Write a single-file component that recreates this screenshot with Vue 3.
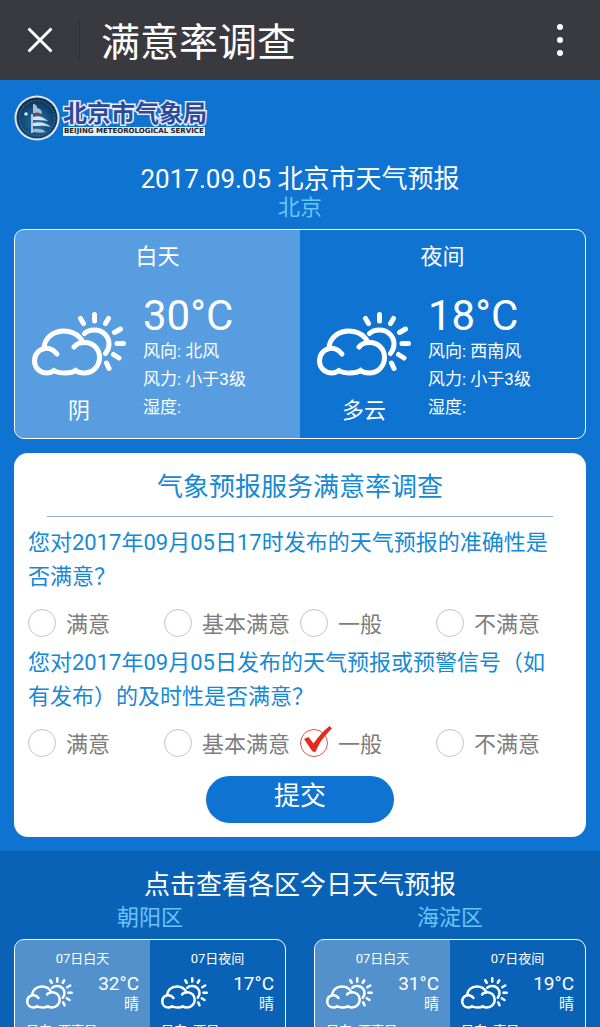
<script setup>
import { ref } from 'vue'

const rays = [
  'M62.5 2.5V9', 'M48.5 6.5L51.5 11.5', 'M76.5 6.5L73.5 11.5', 'M88.5 17L82.5 20.5',
  'M85 31.5H91.5', 'M81.5 42.5L87 46', 'M74.5 51L77 56.5',
]

const today = [
  { label: '白天', sky: '阴', temp: '30°C', details: ['风向: 北风', '风力: 小于3级', '湿度:'] },
  { label: '夜间', sky: '多云', temp: '18°C', details: ['风向: 西南风', '风力: 小于3级', '湿度:'] },
]

const districts = [
  {
    name: '朝阳区',
    parts: [
      { label: '07日白天', temp: '32°C', sky: '晴', wind: '风向: 西南风' },
      { label: '07日夜间', temp: '17°C', sky: '晴', wind: '风向: 西风' },
    ],
  },
  {
    name: '海淀区',
    parts: [
      { label: '07日白天', temp: '31°C', sky: '晴', wind: '风向: 西南风' },
      { label: '07日夜间', temp: '19°C', sky: '晴', wind: '风向: 南风' },
    ],
  },
]

const choices = ['满意', '基本满意', '一般', '不满意']
const questions = ref([
  { id: 'accuracy', text: '您对2017年09月05日17时发布的天气预报的准确性是否满意？', answer: '' },
  { id: 'timeliness', text: '您对2017年09月05日发布的天气预报或预警信号（如有发布）的及时性是否满意？', answer: '一般' },
])
</script>

<template>
  <div class="app">
    <header class="bar">
      <button class="bar-btn close" type="button" aria-label="关闭">
        <svg width="26" height="26" viewBox="0 0 26 26"><path d="M1.5 1.5L24.5 24.5M24.5 1.5L1.5 24.5" /></svg>
      </button>
      <h1 class="bar-title">满意率调查</h1>
      <button class="bar-btn more" type="button" aria-label="更多">
        <svg width="8" height="34" viewBox="0 0 8 34">
          <circle cx="4" cy="4" r="3" /><circle cx="4" cy="17" r="3" /><circle cx="4" cy="30" r="3" />
        </svg>
      </button>
    </header>

    <main class="content">
      <section class="hero">
        <div class="brand">
          <svg class="emblem" width="46" height="46" viewBox="0 0 46 46">
            <defs>
              <radialGradient id="globe" cx="0.5" cy="0.6" r="0.6">
                <stop offset="0" stop-color="#2a72a8" />
                <stop offset="0.6" stop-color="#124a78" />
                <stop offset="1" stop-color="#0b2a48" />
              </radialGradient>
            </defs>
            <circle cx="23" cy="23" r="22.5" fill="#dfe7ec" />
            <circle cx="23" cy="23" r="20.5" fill="url(#globe)" />
            <circle cx="23" cy="23" r="17.5" fill="none" stroke="#7fa0b8" stroke-width="1.5" stroke-dasharray="1.5 1.5" opacity="0.4" />
            <path d="M19 9C22 9 23 11 23 13C27 14 28 16 28 19C24 17 21 18 19 18V9Z" fill="#a9bfd0" />
            <path d="M17 19V38H19V19Z" fill="#b7cad8" />
            <path d="M19 22C25 20 29 22 34 26C29 25 25 25 19 25Z" fill="#d6e3ec" />
            <path d="M19 28C26 26 32 28 37 32C30 30 25 31 19 31Z" fill="#d6e3ec" />
            <path d="M19 34C25 33 29 34 32 37C28 38 24 38 19 37Z" fill="#9fb9cc" />
            <circle cx="12" cy="19" r="1.8" fill="#dce8f0" />
            <circle cx="23" cy="19" r="1.5" fill="#c52b3a" />
          </svg>
          <div class="brand-text">
            <span class="brand-cn">北京市气象局</span>
            <span class="brand-en">BEIJING METEOROLOGICAL SERVICE</span>
          </div>
        </div>

        <h2 class="heading">2017.09.05 北京市天气预报</h2>
        <p class="region">北京</p>

        <div class="today frame">
          <article v-for="part in today" :key="part.label" class="half">
            <h3 class="half-title">{{ part.label }}</h3>
            <div class="half-body">
              <div class="sky">
                <svg class="weather" viewBox="0 0 94 64">
                  <path d="M25 42C21 37 16 36 12.500 36.500C6 38 2.500 43 2.500 49C2.500 56 8 61 15 61C18 61 20 60 22 58.500C25 60.500 29 61 33 61C37 61 41 60.500 43.500 58.500C46 60.500 49 61 52 61C61 61 67.500 54 67.500 45.500C67.500 37 61 30.500 53 30.500C48 30.500 44 32 42 35" />
                  <path d="M12 36C12.500 27 20 19 32 19C41 19 47 23 51 30" />
                  <path d="M52.500 21.500C55 19 59 18 62.500 18C71 18 77 24.500 77 32C77 36 75.500 39 73.500 41.500" />
                  <path v-for="ray in rays" :key="ray" :d="ray" />
                </svg>
                <p class="sky-name">{{ part.sky }}</p>
              </div>
              <div>
                <p class="temp">{{ part.temp }}</p>
                <p v-for="line in part.details" :key="line" class="detail">{{ line }}</p>
              </div>
            </div>
          </article>
        </div>

        <form class="survey" @submit.prevent>
          <h2 class="survey-title">气象预报服务满意率调查</h2>
          <fieldset v-for="question in questions" :key="question.id" class="question">
            <legend class="question-text">{{ question.text }}</legend>
            <div class="choices">
              <label v-for="choice in choices" :key="choice" class="choice">
                <span class="mark">
                  <input v-model="question.answer" class="radio" type="radio" :name="question.id" :value="choice" />
                  <svg v-if="question.answer === choice" class="tick" width="32" height="32" viewBox="0 0 32 32">
                    <path d="M4 14L8.500 12L13.500 18.500C18 12 23 6 29.500 1L32 3.500C25 10 19 18 15.500 27L12.500 26.500Z" />
                  </svg>
                </span>
                {{ choice }}
              </label>
            </div>
          </fieldset>
          <button class="submit" type="submit">提交</button>
        </form>
      </section>

      <section class="areas">
        <h2 class="heading">点击查看各区今日天气预报</h2>
        <div class="area-list">
          <a v-for="area in districts" :key="area.name" class="area" href="#">
            <span class="area-name">{{ area.name }}</span>
            <span class="area-card frame">
              <span v-for="part in area.parts" :key="part.label" class="half small">
                <span class="small-title">{{ part.label }}</span>
                <span class="small-body">
                  <svg class="weather weather-small" viewBox="0 0 94 64">
                    <path d="M25 42C21 37 16 36 12.500 36.500C6 38 2.500 43 2.500 49C2.500 56 8 61 15 61C18 61 20 60 22 58.500C25 60.500 29 61 33 61C37 61 41 60.500 43.500 58.500C46 60.500 49 61 52 61C61 61 67.500 54 67.500 45.500C67.500 37 61 30.500 53 30.500C48 30.500 44 32 42 35" />
                    <path d="M12 36C12.500 27 20 19 32 19C41 19 47 23 51 30" />
                    <path d="M52.500 21.500C55 19 59 18 62.500 18C71 18 77 24.500 77 32C77 36 75.500 39 73.500 41.500" />
                    <path v-for="ray in rays" :key="ray" :d="ray" />
                  </svg>
                  <span class="small-info">
                    <span class="small-temp">{{ part.temp }}</span>
                    <span class="small-sky">{{ part.sky }}</span>
                  </span>
                </span>
                <span class="small-wind">{{ part.wind }}</span>
              </span>
            </span>
          </a>
        </div>
      </section>
    </main>
  </div>
</template>

<style>
body {
  background: #0a62b7;
}
</style>

<style scoped>
.app {
  display: flex;
  flex-direction: column;
  height: 100vh;
  color: #fff;
  font-family: Roboto, "Noto Sans CJK SC", sans-serif;
}
h1, h2, h3, p {
  margin: 0;
  font-weight: 400;
}
button {
  border: 0;
  color: inherit;
  font-family: inherit;
  cursor: pointer;
}
.bar {
  display: flex;
  flex: none;
  align-items: center;
  height: 80px;
  background: #393a3f;
}
.bar-btn {
  display: flex;
  align-items: center;
  justify-content: center;
  width: 80px;
  height: 40px;
  padding: 0;
  background: none;
}
.close {
  border-right: 1px solid #2f3034;
}
.close path {
  fill: none;
  stroke: #fff;
  stroke-width: 3;
}
.more circle {
  fill: #fff;
}
.bar-title {
  flex: 1;
  padding: 5px 0 0 21px;
  font-size: 39px;
  line-height: 48px;
}
.content {
  flex: 1;
  min-height: 0;
  overflow-y: auto;
  scrollbar-width: none;
}
.hero {
  padding: 15px 14px 14px;
  background: #0f73d2;
}
.brand {
  display: flex;
  align-items: center;
  gap: 3px;
  margin-bottom: 21px;
}
.brand-text {
  display: flex;
  flex-direction: column;
  align-items: flex-start;
}
.brand-cn {
  color: #2c4a9a;
  font-size: 24px;
  font-weight: 700;
  line-height: 26px;
  paint-order: stroke fill;
  -webkit-text-stroke: 3px #e6eefa;
}
.brand-en {
  padding: 0 1px;
  background: #e6eefa;
  color: #222;
  font-family: "DejaVu Sans", sans-serif;
  font-size: 7px;
  font-weight: 700;
  line-height: 9px;
  white-space: nowrap;
}
.heading {
  font-size: 26px;
  line-height: 34px;
  text-align: center;
}
.region {
  margin-bottom: 9px;
  color: #6bc5fb;
  font-size: 22px;
  line-height: 24px;
  text-align: center;
}
.frame {
  display: grid;
  grid-template-columns: 1fr 1fr;
  overflow: hidden;
  border: 1px solid #fff;
  border-radius: 10px;
}
.half:first-child {
  background: rgba(255, 255, 255, 0.3);
}
.today .half {
  padding: 11px 17px 17px;
}
.half-title {
  margin-bottom: 22px;
  font-size: 22px;
  line-height: 32px;
  text-align: center;
}
.half-body {
  display: flex;
  align-items: flex-end;
  gap: 17px;
}
.weather {
  display: block;
  width: 94px;
  height: 64px;
  fill: none;
  stroke: #fff;
  stroke-width: 5;
  stroke-linecap: round;
}
.sky-name {
  margin-top: 25px;
  font-size: 22px;
  line-height: 20px;
  text-align: center;
}
.temp {
  font-size: 42px;
  line-height: 42px;
}
.detail {
  font-size: 17px;
  line-height: 28px;
}
.survey {
  margin-top: 14px;
  padding: 17px 14px 14px;
  border-radius: 14px;
  background: #fff;
}
.survey-title {
  margin: 0 19px;
  padding-bottom: 12px;
  border-bottom: 1px solid #8fb0dc;
  color: #1489d6;
  font-size: 26px;
  line-height: 34px;
  text-align: center;
}
.question {
  min-width: 0;
  margin: 9px 0 0;
  padding: 0;
  border: 0;
}
.question-text {
  padding: 0 10px 0 0;
  color: #1489d6;
  font-size: 22px;
  line-height: 34px;
}
.choices {
  display: grid;
  grid-template-columns: repeat(4, 1fr);
  padding-top: 15px;
}
.choice {
  display: flex;
  align-items: flex-end;
  gap: 10px;
  color: #7d7d7d;
  font-size: 22px;
  line-height: 24px;
  white-space: nowrap;
}
.mark {
  position: relative;
  flex: none;
  width: 28px;
  height: 28px;
}
.radio {
  display: block;
  width: 28px;
  height: 28px;
  margin: 0;
  border: 1px solid #c4c4c4;
  border-radius: 50%;
  appearance: none;
}
.radio:checked {
  border-color: #e8504a;
}
.tick {
  position: absolute;
  bottom: 0;
  left: 0;
  fill: #e42a20;
  pointer-events: none;
}
.submit {
  display: block;
  width: 188px;
  height: 47px;
  margin: 19px auto 0;
  padding: 0 0 8px;
  border-radius: 24px;
  background: #0f73d2;
  font-size: 26px;
  line-height: 34px;
}
.areas {
  padding: 17px 14px 14px;
  background: #0a62b7;
}
.area-list {
  display: grid;
  grid-template-columns: 1fr 1fr;
  gap: 28px;
}
.area {
  color: #fff;
  text-decoration: none;
}
.area-name {
  display: block;
  margin-bottom: 5px;
  color: #6bc5fb;
  font-size: 22px;
  line-height: 32px;
  text-align: center;
}
.small {
  display: block;
  padding: 9px 11px;
}
.small-title,
.small-wind {
  display: block;
  font-size: 13px;
  line-height: 20px;
}
.small-title {
  margin-bottom: 4px;
  text-align: center;
}
.small-body {
  display: flex;
  align-items: center;
  justify-content: space-between;
  margin-bottom: 8px;
}
.weather-small {
  width: 47px;
  height: 32px;
}
.small-info {
  text-align: right;
}
.small-temp,
.small-sky {
  display: block;
}
.small-temp {
  font-size: 19px;
  line-height: 22px;
}
.small-sky {
  font-size: 15px;
  line-height: 18px;
}
</style>
